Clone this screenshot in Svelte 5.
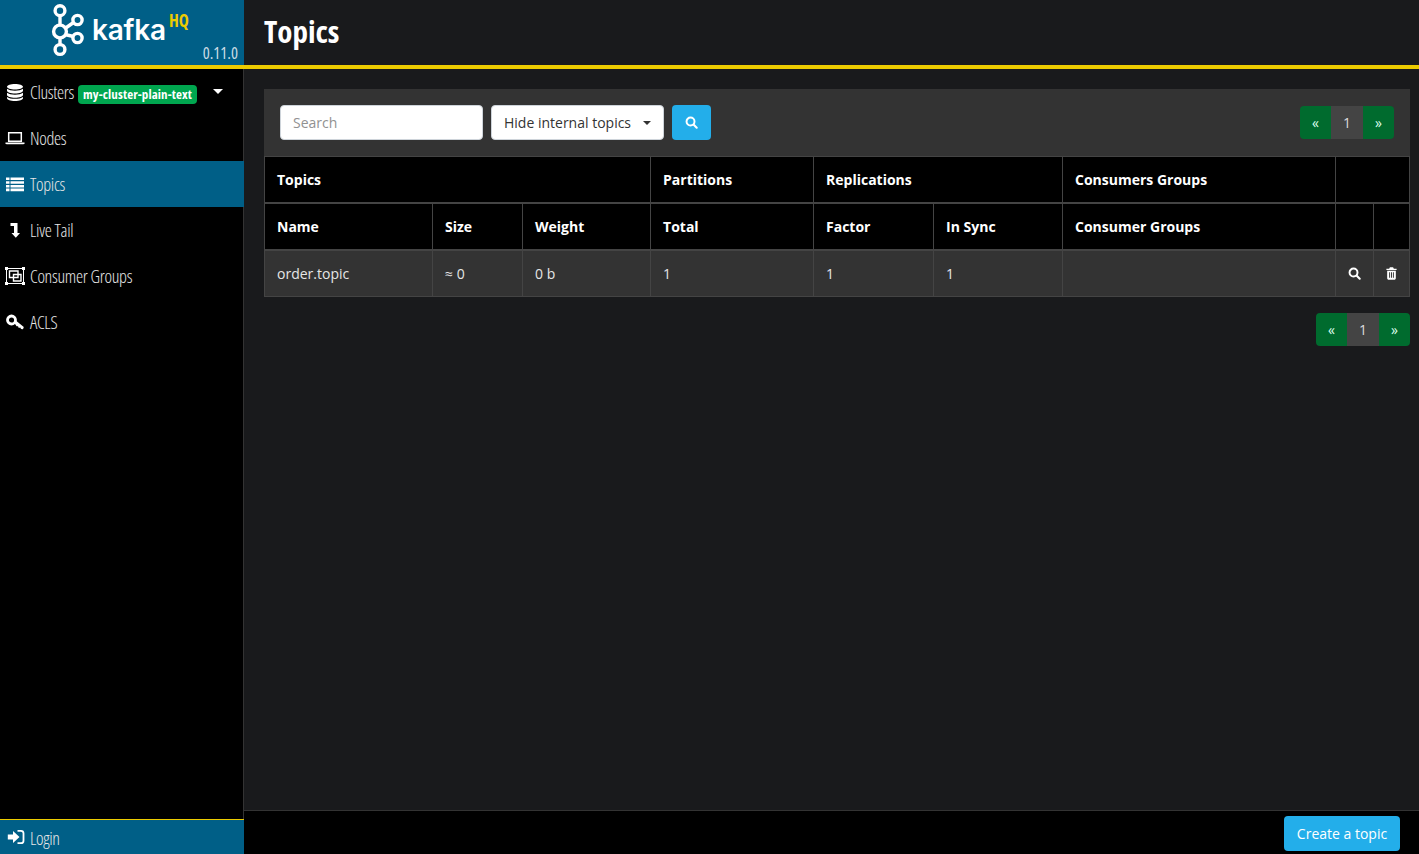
<script>
	let navItems = [
		{ id: 'nodes', label: 'Nodes' },
		{ id: 'topics', label: 'Topics', active: true },
		{ id: 'tail', label: 'Live Tail' },
		{ id: 'groups', label: 'Consumer Groups' },
		{ id: 'acls', label: 'ACLS' }
	];
</script>

{#snippet icon(id)}
	{#if id === 'nodes'}
		<svg class="ico" viewBox="0 0 20 16"><path fill="none" stroke="#fff" stroke-width="1.500" d="M3.700 2.700h12.600v8.600H3.700z"/><path fill="#fff" d="M.5 12.500h19v.8l-1 1h-17l-1-1z"/></svg>
	{:else if id === 'topics'}
		<svg class="ico" viewBox="0 0 20 16"><path fill="#fff" d="M1 1.500h3.500v2.600H1zM1 5.200h3.500v2.600H1zM1 8.900h3.500v2.600H1zM1 12.600h3.500v2.600H1zM5.500 1.500H19v2.600H5.500zM5.500 5.200H19v2.600H5.500zM5.500 8.900H19v2.600H5.500zM5.500 12.600H19v2.600H5.500z"/></svg>
	{:else if id === 'tail'}
		<svg class="ico" viewBox="0 0 20 16"><path fill="#fff" d="M5.500 1h7v10H15l-4.200 4.800L6.500 11H9V4H5.500z"/></svg>
	{:else if id === 'groups'}
		<svg class="ico tall" viewBox="0 0 20 18"><path fill="none" stroke="#fff" stroke-width="1" d="M1.500 1.500h17v15h-17z"/><path fill="none" stroke="#fff" stroke-width="1.400" d="M4.500 4h8.500v6.500H4.500zM8.500 7.500H16v6.500H8.500z"/><path fill="#fff" d="M0 0h3v3H0zM17 0h3v3h-3zM0 15h3v3H0zM17 15h3v3h-3z"/></svg>
	{:else if id === 'acls'}
		<svg class="ico" viewBox="0 0 20 16"><circle cx="6.500" cy="6" r="4" fill="none" stroke="#fff" stroke-width="2.800"/><path fill="#fff" d="M9 8.500l1.800-2 8 6.500-.8 2.300-2-.2-.7-1.600-1.500.4-.8-1.700-1.400.1z"/></svg>
	{/if}
{/snippet}

<div class="wrapper">
	<aside class="sidebar">
		<div class="brand">
			<div class="logo">
				<svg class="mark" viewBox="0 0 34 54" width="34" height="54">
					<g fill="none" stroke="#fff" stroke-width="3.400">
						<circle cx="9" cy="6.700" r="4.900"/>
						<circle cx="9" cy="27.500" r="6.400"/>
						<circle cx="9" cy="45.500" r="4.900"/>
						<circle cx="26.500" cy="16" r="4.600"/>
						<circle cx="26.500" cy="34" r="4.600"/>
						<path d="M9 11v11M9 33v8M14 24.500l8.500-6M14 30.500l8.500 2"/>
					</g>
				</svg>
				<span class="word">kafka</span>
				<span class="hq">HQ</span>
			</div>
			<span class="version">0.11.0</span>
		</div>

		<nav class="menu">
			<div class="item clusters">
				<svg class="ico db" viewBox="0 0 20 18"><path fill="#fff" d="M10 1c4.400 0 8 1.200 8 2.700S14.400 6.400 10 6.400 2 5.200 2 3.700 5.600 1 10 1zM2 5.800c1.500 1.300 4.700 1.900 8 1.900s6.500-.6 8-1.900v2c0 1.500-3.600 2.700-8 2.700S2 9.300 2 7.800zM2 9.800c1.500 1.300 4.700 1.900 8 1.900s6.500-.6 8-1.900v2.200c0 1.500-3.600 2.700-8 2.700S2 13.500 2 12zM2 13.900c1.500 1.300 4.700 1.900 8 1.900s6.500-.6 8-1.900v1.400c0 1.500-3.600 2.700-8 2.700s-8-1.200-8-2.700z"/></svg>
				<span class="label">Clusters</span>
				<span class="badge">my-cluster-plain-text</span>
				<span class="caret"></span>
			</div>
			{#each navItems as item}
				<div class="item" class:active={item.active}>
					{@render icon(item.id)}
					<span class="label">{item.label}</span>
				</div>
			{/each}
		</nav>

		<div class="login">
			<svg class="ico small" viewBox="0 0 18 16"><path fill="#fff" d="M.8 5.500h5.200V2l6.500 6L6 14v-3.500H.8z"/><path fill="none" stroke="#fff" stroke-width="1.800" d="M10.500 1.800h3.500c1.500 0 2.500 1 2.500 2.500v7.400c0 1.500-1 2.500-2.500 2.500h-3.500"/></svg>
			<span class="label">Login</span>
		</div>
	</aside>

	<main class="main">
		<header class="title"><h1>Topics</h1></header>

		<section class="content">
			<div class="toolbar">
				<input class="search" placeholder="Search" />
				<div class="select">Hide internal topics<span class="caret dark"></span></div>
				<button class="go" aria-label="Search">
					<svg viewBox="0 0 16 16" width="13" height="13"><circle cx="6.800" cy="6.800" r="4.900" fill="none" stroke="#fff" stroke-width="2.400"/><path stroke="#fff" stroke-width="2.600" stroke-linecap="round" d="M10.800 10.800l3.600 3.600"/></svg>
				</button>
				<div class="pager right">
					<span>«</span><span class="num">1</span><span>»</span>
				</div>
			</div>

			<table>
				<colgroup>
					<col style="width:168px" /><col style="width:90px" /><col style="width:128px" />
					<col style="width:163px" /><col style="width:120px" /><col style="width:129px" />
					<col style="width:273px" /><col style="width:38px" /><col style="width:36px" />
				</colgroup>
				<thead>
					<tr>
						<th colspan="3">Topics</th>
						<th>Partitions</th>
						<th colspan="2">Replications</th>
						<th>Consumers Groups</th>
						<th colspan="2"></th>
					</tr>
					<tr>
						<th>Name</th><th>Size</th><th>Weight</th><th>Total</th><th>Factor</th><th>In Sync</th><th>Consumer Groups</th><th></th><th></th>
					</tr>
				</thead>
				<tbody>
					<tr>
						<td>order.topic</td><td>≈ 0</td><td>0 b</td><td>1</td><td>1</td><td>1</td><td></td>
						<td class="act">
							<svg viewBox="0 0 16 16" width="13" height="13"><circle cx="6.800" cy="6.800" r="4.900" fill="none" stroke="#fff" stroke-width="2.400"/><path stroke="#fff" stroke-width="2.600" stroke-linecap="round" d="M10.800 10.800l3.600 3.600"/></svg>
						</td>
						<td class="act">
							<svg viewBox="0 0 14 16" width="11" height="13"><path fill="#fff" fill-rule="evenodd" d="M5 0h4l1 2h3.500v1.500H.5V2H4zM1.500 4.500h11V14c0 1-.7 2-2 2h-7c-1.300 0-2-1-2-2zM4 6.500v7h1.200v-7zM6.400 6.500v7h1.200v-7zM8.800 6.500v7H10v-7z"/></svg>
						</td>
					</tr>
				</tbody>
			</table>

			<div class="below">
				<div class="pager">
					<span>«</span><span class="num">1</span><span>»</span>
				</div>
			</div>
		</section>

		<footer class="foot">
			<button class="create">Create a topic</button>
		</footer>
	</main>
</div>

<style>
	:global(body) {
		margin: 0;
		background: #191a1c;
		color: #fff;
		font-family: "Open Sans", sans-serif;
		font-size: 14px;
	}
	.wrapper {
		display: flex;
		height: 854px;
		overflow: hidden;
	}
	.sidebar {
		width: 243px;
		flex: none;
		display: flex;
		flex-direction: column;
		background: #000;
		border-right: 1px solid #333;
	}
	.brand {
		height: 65px;
		background: #005f87;
		position: relative;
		margin-right: -1px;
		border-bottom: 4px solid #eccb00;
	}
	.logo {
		display: flex;
		align-items: flex-start;
		padding: 4px 0 0 51px;
	}
	.mark {
		flex: none;
	}
	.word {
		font-family: "Inter", "Open Sans", sans-serif;
		font-size: 28px;
		line-height: 30px;
		margin: 11px 0 0 7px;
		font-weight: 600;
		letter-spacing: -0.2px;
	}
	.hq {
		color: #eccb00;
		font-size: 17px;
		font-weight: 700;
		font-stretch: 75%;
		line-height: 20px;
		margin: 7px 0 0 3px;
	}
	.version {
		position: absolute;
		right: 6px;
		bottom: 2px;
		color: #c9dbe4;
		font-size: 16.500px;
		font-stretch: 75%;
		line-height: 20px;
	}
	.menu {
		flex: 1;
	}
	.item {
		height: 46px;
		display: flex;
		align-items: center;
		padding-left: 5px;
		color: #fff;
	}
	.item.active {
		background: #005f87;
		margin-right: -1px;
	}
	.label {
		font-size: 18px;
		font-stretch: 75%;
		font-weight: 300;
		letter-spacing: -0.3px;
		margin-left: 5px;
		white-space: nowrap;
		color: #e6e6e6;
	}
	.login .label {
		position: relative;
		top: 1px;
	}
	.ico {
		width: 20px;
		height: 16px;
		flex: none;
	}
	.ico.tall,
	.db {
		height: 18px;
	}
	.ico.small {
		width: 18px;
	}
	.clusters {
		position: relative;
	}
	.badge {
		background: #00a64f;
		color: #fff;
		font-weight: 700;
		font-size: 13px;
		font-stretch: 75%;
		letter-spacing: 0.1px;
		line-height: 13px;
		padding: 3px 5px;
		border-radius: 4px;
		margin-left: 4px;
		position: relative;
		top: 2px;
	}
	.caret {
		width: 0;
		height: 0;
		border-top: 5px solid #fff;
		border-left: 5px solid transparent;
		border-right: 5px solid transparent;
	}
	.clusters .caret {
		position: absolute;
		left: 213px;
		top: 20px;
	}
	.caret.dark {
		border-top-color: #333;
		border-width: 4px 4px 0;
		margin-left: 12px;
	}
	.login {
		height: 34px;
		background: #005f87;
		border-top: 1px solid #eccb00;
		display: flex;
		align-items: center;
		padding-left: 7px;
		margin-right: -1px;
	}
	.main {
		flex: 1;
		min-width: 0;
		display: flex;
		flex-direction: column;
	}
	.title {
		height: 65px;
		background: #191a1c;
		border-bottom: 4px solid #eccb00;
		display: flex;
		align-items: center;
		padding-left: 20px;
		flex: none;
	}
	h1 {
		margin: 0;
		font-size: 31px;
		font-weight: 700;
		font-stretch: 75%;
		line-height: 36px;
		position: relative;
		top: -2px;
	}
	.content {
		flex: 1;
		padding: 20px 9px 0 20px;
	}
	.toolbar {
		height: 67px;
		background: #333;
		display: flex;
		align-items: center;
		padding: 0 16px;
		gap: 8px;
	}
	.search {
		width: 203px;
		height: 35px;
		box-sizing: border-box;
		border: 1px solid #ced4da;
		border-radius: 4px;
		padding: 0 12px;
		font: 14px "Open Sans", sans-serif;
		background: #fff;
	}
	.search::placeholder {
		color: #919191;
	}
	.select {
		width: 173px;
		height: 35px;
		box-sizing: border-box;
		background: #fff;
		border: 1px solid #ced4da;
		border-radius: 4px;
		color: #333;
		display: flex;
		align-items: center;
		padding-left: 12px;
	}
	.go {
		width: 39px;
		height: 35px;
		border: 0;
		padding: 0;
		background: #23aeea;
		border-radius: 4px;
		display: flex;
		align-items: center;
		justify-content: center;
	}
	.right {
		margin-left: auto;
	}
	.pager {
		display: flex;
		height: 33px;
		border-radius: 4px;
		overflow: hidden;
		line-height: 33px;
		text-align: center;
	}
	.pager span {
		width: 31px;
		background: #006b2e;
		color: #dfe;
	}
	.pager .num {
		width: 32px;
		background: #444;
		color: #ddd;
	}
	table {
		width: 100%;
		border-collapse: collapse;
		table-layout: fixed;
	}
	th, td {
		border: 1px solid #444;
		height: 47px;
		box-sizing: border-box;
		padding: 0 12px;
		text-align: left;
	}
	th {
		background: #000;
		font-weight: 700;
	}
	thead tr:first-child th {
		height: 46px;
	}
	thead tr:last-child th {
		border-top-width: 2px;
		border-bottom-width: 2px;
	}
	td {
		background: #333;
		color: #e6e6e6;
	}
	td.act {
		padding: 0;
		text-align: center;
	}
	td.act svg {
		display: block;
		margin: 0 auto;
	}
	.below {
		display: flex;
		justify-content: flex-end;
		margin-top: 16px;
	}
	.foot {
		flex: none;
		background: #000;
		border-top: 1px solid #333;
		display: flex;
		align-items: center;
		justify-content: flex-end;
		padding-right: 19px;
		padding-top: 2px;
		height: 41px;
	}
	.create {
		height: 35px;
		width: 116px;
		border: 0;
		border-radius: 4px;
		background: #23aeea;
		color: #fff;
		font: 14px "Open Sans", sans-serif;
		padding: 0;
	}
</style>
